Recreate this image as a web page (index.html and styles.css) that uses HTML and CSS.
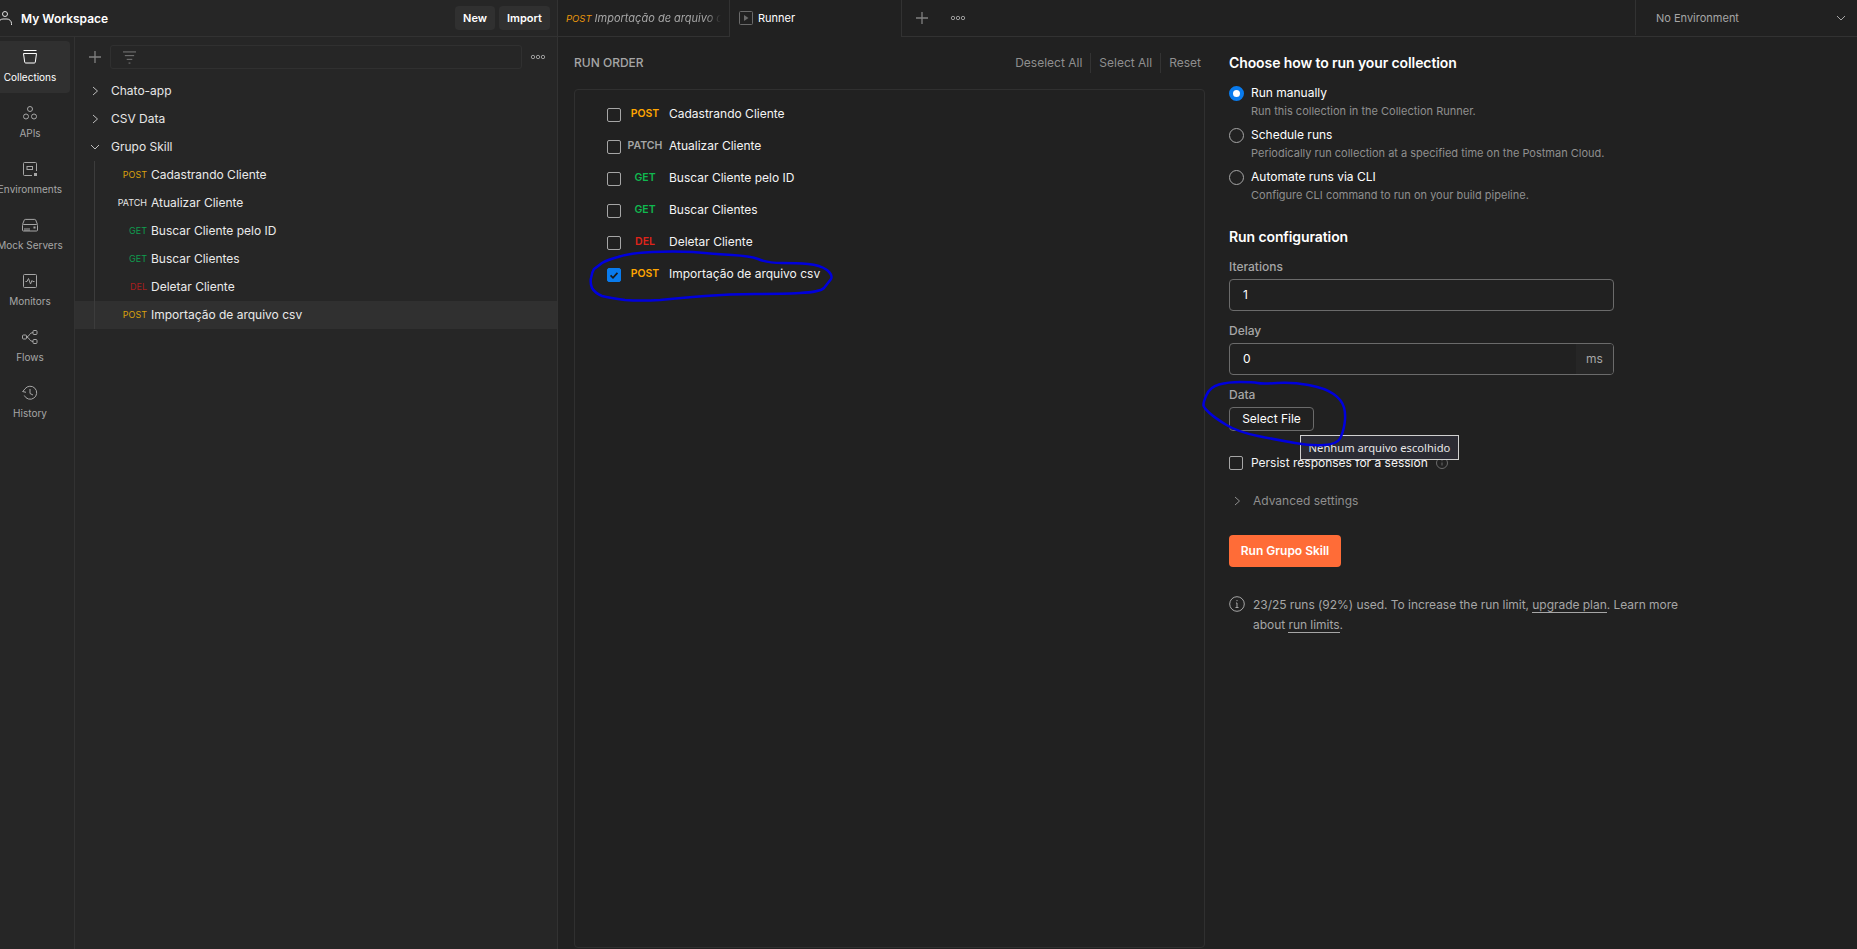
FILE: index.html
```html
<!DOCTYPE html>
<html lang="pt">
<head>
<meta charset="utf-8">
<title>Runner</title>
<link rel="stylesheet" href="styles.css">
</head>
<body>
<div class="app">
  <aside class="left">
    <header class="workspace-bar">
      <svg class="user-icon" viewBox="0 0 16 16"><circle cx="8" cy="4" r="2.5"/><path d="M1.5 15v-1.500a4.500 4.500 0 0 1 4.500-4.500h4a4.500 4.500 0 0 1 4.500 4.500V15"/></svg>
      <span class="workspace-name">My Workspace</span>
      <button class="top-btn">New</button>
      <button class="top-btn">Import</button>
    </header>
    <div class="left-body">
      <nav class="rail">
        <a class="rail-item active">
          <svg class="icon" viewBox="0 0 16 16"><path d="M1.500 1.500h13"/><path d="M1.500 4.500h13l-1.200 8.700a1 1 0 0 1-1 .8H3.700a1 1 0 0 1-1-.8z"/></svg>
          <span>Collections</span>
        </a>
        <a class="rail-item">
          <svg class="icon" viewBox="0 0 16 16"><circle cx="8" cy="4" r="2.500"/><circle cx="4" cy="11.500" r="2.500"/><circle cx="12" cy="11.500" r="2.500"/></svg>
          <span>APIs</span>
        </a>
        <a class="rail-item">
          <svg class="icon" viewBox="0 0 16 16"><path d="M10 14.500H2.500a1 1 0 0 1-1-1v-11a1 1 0 0 1 1-1h11a1 1 0 0 1 1 1V10"/><rect x="5" y="5.500" width="5.500" height="3"/><rect class="solid" x="12" y="12" width="3" height="3"/></svg>
          <span>Environments</span>
        </a>
        <a class="rail-item">
          <svg class="icon" viewBox="0 0 16 16"><path d="M.500 7.500l1.800-4.500a1 1 0 0 1 1-.6h9.400a1 1 0 0 1 1 .6l1.800 4.500"/><rect x=".5" y="7.500" width="15" height="6.500" rx="1"/><path d="M3 14v-3M5 14v-3M7 14v-3"/><rect class="solid" x="11.500" y="9.500" width="2" height="2"/></svg>
          <span>Mock Servers</span>
        </a>
        <a class="rail-item">
          <svg class="icon" viewBox="0 0 16 16"><rect x="1.500" y="1.500" width="13" height="13" rx="1"/><path d="M3.500 8.500h1.500l1.500-3 2 5.500 1.500-3.500.8 1h1.700"/></svg>
          <span>Monitors</span>
        </a>
        <a class="rail-item">
          <svg class="icon" viewBox="0 0 16 16"><rect x=".5" y="6" width="4" height="4" rx="1"/><rect x="11" y="1.500" width="4" height="4" rx="1"/><rect x="11" y="10.500" width="4" height="4" rx="1"/><path d="M4.500 8c3 0 2.500-4.500 6.500-4.500M4.500 8c3 0 2.500 4.500 6.500 4.500"/></svg>
          <span>Flows</span>
        </a>
        <a class="rail-item">
          <svg class="icon" viewBox="0 0 16 16"><path d="M2.300 10.500A6.500 6.500 0 1 0 3 3.800L.8 6.500"/><path d="M.5 6.500l3.500.8"/><path d="M8 4v4.500l3 1.500"/></svg>
          <span>History</span>
        </a>
      </nav>
      <section class="tree">
        <div class="tree-tools">
          <svg class="plus" viewBox="0 0 14 14"><path d="M7 1v12M1 7h12"/></svg>
          <div class="filter">
            <svg class="filter-icon" viewBox="0 0 16 14"><path d="M1 1h14M3 5h10M5 9h6M7 13h2"/></svg>
          </div>
          <svg class="dots" viewBox="0 0 16 6"><circle cx="3" cy="3" r="1.700"/><circle cx="8" cy="3" r="1.700"/><circle cx="13" cy="3" r="1.700"/></svg>
        </div>
        <div class="folder"><svg class="chev" viewBox="0 0 12 12"><path d="M4 2l4.500 4L4 10"/></svg><span>Chato-app</span></div>
        <div class="folder"><svg class="chev" viewBox="0 0 12 12"><path d="M4 2l4.500 4L4 10"/></svg><span>CSV Data</span></div>
        <div class="folder"><svg class="chev" viewBox="0 0 12 12"><path d="M2 4l4 4 4-4"/></svg><span>Grupo Skill</span></div>
        <div class="children">
          <div class="req"><span class="req-method post">POST</span><span>Cadastrando Cliente</span></div>
          <div class="req"><span class="req-method patch">PATCH</span><span>Atualizar Cliente</span></div>
          <div class="req"><span class="req-method get">GET</span><span>Buscar Cliente pelo ID</span></div>
          <div class="req"><span class="req-method get">GET</span><span>Buscar Clientes</span></div>
          <div class="req"><span class="req-method del">DEL</span><span>Deletar Cliente</span></div>
          <div class="req selected"><span class="req-method post">POST</span><span>Importação de arquivo csv</span></div>
        </div>
      </section>
    </div>
  </aside>

  <main class="main">
    <div class="tabbar">
      <div class="tab tab-preview"><span class="tab-method">POST</span><span class="tab-name">Importação de arquivo csv</span></div>
      <div class="tab tab-runner">
        <svg class="runner-icon" viewBox="0 0 14 14"><rect x=".5" y=".5" width="13" height="13" rx="1"/><path class="solid" d="M5 4l4.500 3L5 10z"/></svg>
        <span>Runner</span>
      </div>
      <div class="tab-actions">
        <svg class="plus" viewBox="0 0 14 14"><path d="M7 1v12M1 7h12"/></svg>
        <svg class="dots" viewBox="0 0 16 6"><circle cx="3" cy="3" r="1.700"/><circle cx="8" cy="3" r="1.700"/><circle cx="13" cy="3" r="1.700"/></svg>
      </div>
      <div class="env"><span>No Environment</span><svg class="chev" viewBox="0 0 12 12"><path d="M2 4l4 4 4-4"/></svg></div>
    </div>

    <div class="runner">
      <section class="order">
        <div class="order-head">
          <span class="order-title">RUN ORDER</span>
          <div class="order-actions"><span>Deselect All</span><span>Select All</span><span>Reset</span></div>
        </div>
        <div class="order-box">
          <div class="order-row"><span class="check"></span><span class="run-method post">POST</span><span>Cadastrando Cliente</span></div>
          <div class="order-row"><span class="check"></span><span class="run-method patch">PATCH</span><span>Atualizar Cliente</span></div>
          <div class="order-row"><span class="check"></span><span class="run-method get">GET</span><span>Buscar Cliente pelo ID</span></div>
          <div class="order-row"><span class="check"></span><span class="run-method get">GET</span><span>Buscar Clientes</span></div>
          <div class="order-row"><span class="check"></span><span class="run-method del">DEL</span><span>Deletar Cliente</span></div>
          <div class="order-row"><span class="check checked"><svg viewBox="0 0 14 14"><path d="M3 7.500l2.800 2.700L11 4.500"/></svg></span><span class="run-method post">POST</span><span>Importação de arquivo csv</span></div>
        </div>
      </section>

      <section class="config">
        <h2 class="config-title">Choose how to run your collection</h2>
        <div class="options">
          <div class="option"><span class="radio on"></span><div><div class="option-name">Run manually</div><div class="option-desc">Run this collection in the Collection Runner.</div></div></div>
          <div class="option"><span class="radio"></span><div><div class="option-name">Schedule runs</div><div class="option-desc">Periodically run collection at a specified time on the Postman Cloud.</div></div></div>
          <div class="option"><span class="radio"></span><div><div class="option-name">Automate runs via CLI</div><div class="option-desc">Configure CLI command to run on your build pipeline.</div></div></div>
        </div>
        <h2 class="config-title section-gap">Run configuration</h2>
        <label class="field-label first">Iterations</label>
        <div class="input"><span class="input-value">1</span></div>
        <label class="field-label">Delay</label>
        <div class="input"><span class="input-value">0</span><span class="input-unit">ms</span></div>
        <label class="field-label">Data</label>
        <div class="file-wrap">
          <button class="file-btn">Select File</button>
          <div class="tooltip">Nenhum arquivo escolhido</div>
        </div>
        <div class="persist">
          <span class="check"></span><span>Persist responses for a session</span>
          <svg class="info-small" viewBox="0 0 12 12"><circle cx="6" cy="6" r="5.500"/><path d="M6 5.500v3M6 3.200v1"/></svg>
        </div>
        <div class="advanced"><svg class="chev" viewBox="0 0 12 12"><path d="M4 2l4.500 4L4 10"/></svg><span>Advanced settings</span></div>
        <button class="run-btn">Run Grupo Skill</button>
        <div class="limit">
          <svg class="info" viewBox="0 0 16 16"><circle cx="8" cy="8" r="7.300"/><path d="M8 7v4.500M6.500 11.500h3M8 4v1.200M7 7h1"/></svg>
          <p>23/25 runs (92%) used. To increase the run limit, <a>upgrade plan</a>. Learn more about <a>run limits</a>.</p>
        </div>
      </section>
    </div>
  </main>

  <svg class="scribble" viewBox="0 0 1857 949">
    <path d="M594 269Q597 267 602 263Q607 260 618 257Q630 253 652 252Q673 251 693 252Q713 254 732 255Q750 256 758 259Q767 263 782 263Q797 263 808 264Q820 265 827 270Q833 275 831 279Q828 283 824 288Q820 292 800 293Q780 294 755 294Q730 294 705 296Q680 298 660 300Q640 301 625 300Q610 298 602 296Q595 293 592 288Q590 283 591 278Q592 272 594 269Z"/>
    <path d="M1203.500 405.500Q1203 403 1206.500 395Q1210 387 1219 384.500Q1228 382 1240.500 382Q1253 382 1257.500 383Q1262 384 1277 383Q1292 382 1308.500 385Q1325 388 1333.500 394Q1342 400 1344 407.500Q1346 415 1344.500 424Q1343 433 1340 438.500Q1337 444 1324.500 445Q1312 446 1295 443Q1278 440 1258 436Q1238 432 1226.500 425Q1215 418 1209.500 413Q1204 408 1203.500 405.500Z"/>
  </svg>
</div>
</body>
</html>
```
FILE: styles.css
```css
* { box-sizing: border-box; }
html, body { margin: 0; height: 100%; background: #212121; }
body { font-family: Inter, "Noto Sans", sans-serif; font-size: 12px; color: #fff; overflow: hidden; }
button { font-family: inherit; border: 0; padding: 0; color: #fff; }
svg { display: block; flex: none; fill: none; stroke: currentColor; stroke-width: 1; }
svg .solid { fill: currentColor; stroke: none; }

.app { position: relative; display: flex; width: 100%; height: 100%; }

/* Left column */
.left { width: 558px; flex: none; display: flex; flex-direction: column; background: #262626; border-right: 1px solid #323232; }
.workspace-bar { height: 37px; flex: none; display: flex; align-items: center; gap: 4px; padding-right: 7px; border-bottom: 1px solid #323232; }
.user-icon { width: 16px; height: 16px; margin-left: -3px; margin-right: 4px; color: #e0e0e0; }
.workspace-name { flex: 1; font-weight: 600; font-size: 12px; }
.top-btn { height: 24px; padding: 0 8px; border-radius: 4px; background: #303030; font-size: 11px; font-weight: 600; }
.top-btn:first-of-type { width: 40px; }
.top-btn:last-of-type { width: 51px; }

.left-body { flex: 1; display: flex; min-height: 0; }
.rail { width: 85px; margin-left: -10px; flex: none; padding: 4px 4px 0 0; border-right: 1px solid #323232; display: flex; flex-direction: column; gap: 4px; overflow: hidden; }
.rail-item { height: 52px; display: flex; flex-direction: column; align-items: center; padding-top: 8px; gap: 4px; font-size: 10px; line-height: 16px; color: #a6a6a6; border-radius: 4px; white-space: nowrap; }
.rail-item .icon { width: 16px; height: 16px; color: #a6a6a6; }
.rail-item.active { background: #303030; color: #fff; }
.rail-item.active .icon { color: #fff; }

.tree { flex: 1; min-width: 0; }
.tree-tools { display: flex; align-items: center; height: 24px; margin: 8px 0; padding: 0 11px 0 14px; }
.plus { width: 14px; height: 14px; color: #808080; stroke-width: 1.3; }
.tree-tools .plus { margin-right: 8px; margin-left: -1px; }
.filter { flex: 1; height: 24px; display: flex; align-items: center; padding-left: 11px; border: 1px solid #303030; border-radius: 3px; }
.filter-icon { width: 15px; height: 13px; color: #808080; }
.dots { width: 16px; height: 6px; color: #a6a6a6; stroke-width: .9; }
.tree-tools .dots { margin-left: 8px; }

.folder { height: 28px; display: flex; align-items: center; gap: 10px; padding: 0 0 1px 14px; color: #e6e6e6; }
.chev { width: 12px; height: 12px; color: #bdbdbd; }
.children { position: relative; }
.children::before { content: ""; position: absolute; left: 19px; top: 0; bottom: 0; width: 1px; background: #3c3c3c; }
.req { height: 28px; display: flex; align-items: center; gap: 4px; padding-bottom: 1px; color: #eaeaea; }
.req.selected { background: #303030; }
.req-method { width: 72px; text-align: right; font-size: 9px; }

.post { color: #d9a00e; }
.patch { color: #e6e6e6; }
.get { color: #0f9d4f; }
.del { color: #a81e1e; }

/* Tabs */
.main { flex: 1; min-width: 0; display: flex; flex-direction: column; }
.tabbar { height: 37px; flex: none; display: flex; border-bottom: 1px solid #323232; }
.tab { height: 37px; display: flex; align-items: center; border-right: 1px solid #323232; white-space: nowrap; overflow: hidden; font-size: 11px; }
.tab-preview { width: 172px; padding-left: 8px; gap: 3px; font-style: italic; color: #a6a6a6; height: 36px; }
.tab-method { font-size: 9.500px; color: #e8960c; }
.tab-name { width: 126px; overflow: hidden; -webkit-mask-image: linear-gradient(90deg, #000 88%, transparent); mask-image: linear-gradient(90deg, #000 88%, transparent); }
.tab-runner { width: 172px; padding: 0 0 1px 9px; gap: 5px; background: #212121; }
.runner-icon { width: 14px; height: 14px; color: #6b6b6b; }
.tab-actions { display: flex; align-items: center; height: 36px; padding-left: 13px; gap: 21px; }
.env { margin-left: auto; width: 222px; height: 35px; display: flex; align-items: center; justify-content: space-between; padding: 0 10px 0 20px; border-left: 1px solid #323232; font-size: 11px; color: #a6a6a6; }
.env .chev { color: #a6a6a6; }

/* Runner */
.runner { flex: 1; display: flex; min-height: 0; }
.order { width: 647px; flex: none; padding: 16px 0 1px 16px; display: flex; flex-direction: column; }
.order-head { height: 20px; flex: none; margin-bottom: 16px; display: flex; align-items: center; justify-content: space-between; padding-bottom: 1px; }
.order-title { font-size: 12px; font-weight: 500; color: #a6a6a6; }
.order-actions { display: flex; font-size: 12px; color: #8f8f8f; padding-right: 4px; margin-left: auto; }
.order-actions span { padding: 0 8px; border-right: 1px solid #333; line-height: 20px; }
.order-actions span:last-child { border: 0; padding-right: 0; }
.order-box { flex: 1; border: 1px solid #303030; border-radius: 4px; padding-top: 8px; }
.order-row { height: 32px; display: flex; align-items: center; padding: 0 0 1px 32px; color: #f4f4f4; }
.check { width: 14px; height: 14px; flex: none; border: 1px solid #a6a6a6; border-radius: 2px; margin-top: 3px; }
.check.checked { background: #097bed; border-color: #097bed; }
.check.checked svg { width: 12px; height: 12px; stroke: #1a1a1a; stroke-width: 2; }
.run-method { width: 40px; margin: 0 4px; text-align: center; font-size: 10.500px; font-weight: 600; }
.run-method.post { color: #ffa600; }
.run-method.patch { color: #a6a6a6; }
.run-method.get { color: #10b84f; }
.run-method.del { color: #e0241a; }

/* Config */
.config { flex: none; width: 470px; padding: 16px 0 0 24px; }
.config-title { margin: 0; font-size: 14px; letter-spacing: -.1px; line-height: 20px; font-weight: 600; color: #fff; }
.section-gap { margin-top: 24px; }
.options { display: flex; flex-direction: column; gap: 6px; margin-top: 10px; }
.option { display: flex; gap: 8px; }
.radio { width: 15px; height: 15px; flex: none; margin-top: 3px; border: 1px solid #a6a6a6; border-radius: 50%; margin-right: -1px; }
.radio.on { border: 4px solid #097bed; background: #fff; }
.option-name { line-height: 20px; font-size: 12px; color: #fff; }
.option-desc { line-height: 16px; font-size: 11px; color: #8f8f8f; }
.field-label { display: block; margin-top: 12px; line-height: 16px; font-size: 12px; font-weight: 500; color: #a6a6a6; }
.input { width: 385px; height: 32px; margin-top: 4px; display: flex; align-items: center; border: 1px solid #6b6b6b; border-radius: 4px; overflow: hidden; }
.input-value { flex: 1; padding: 0 0 1px 13px; font-size: 12px; }
.input-unit { width: 37px; height: 100%; display: flex; align-items: center; justify-content: center; padding-bottom: 1px; background: #262626; color: #a6a6a6; }
.file-wrap { position: relative; margin-top: 4px; height: 24px; }
.file-btn { width: 85px; height: 24px; padding-bottom: 1px; background: transparent; border: 1px solid #6b6b6b; border-radius: 4px; font-size: 12px; }
.tooltip { position: absolute; z-index: 1; left: 71px; top: 28px; width: 159px; height: 25px; display: flex; align-items: center; justify-content: center; background: #2b2b33; border: 1px solid #d0d0d0; font-family: "Noto Sans", sans-serif; font-size: 11.200px; color: #e8e8e8; }
.persist { display: flex; align-items: center; height: 20px; margin-top: 22px; gap: 8px; padding-bottom: 1px; color: #f4f4f4; }
.persist .check { margin-top: 1px; }
.info-small { width: 12px; height: 12px; color: #6b6b6b; }
.advanced { display: flex; align-items: center; gap: 10px; height: 20px; margin-top: 18px; padding: 0 0 1px 2px; color: #8f8f8f; }
.advanced .chev { color: #8f8f8f; }
.run-btn { display: block; width: 112px; height: 32px; margin-top: 24px; padding-bottom: 1px; background: #ff6c37; border-radius: 4px; font-size: 12px; font-weight: 600; }
.limit { display: flex; gap: 8px; width: 456px; margin-top: 28px; color: #a6a6a6; }
.info { width: 16px; height: 16px; color: #a6a6a6; margin-top: 1px; }
.limit p { margin: 0; line-height: 20px; font-size: 12px; letter-spacing: -.04px; }
.limit a { border-bottom: 1px solid #a6a6a6; }

.scribble { position: absolute; left: 0; top: 0; width: 1857px; height: 949px; z-index: 5; pointer-events: none; stroke: #0000dc; stroke-width: 2.500; stroke-linejoin: round; }
```
